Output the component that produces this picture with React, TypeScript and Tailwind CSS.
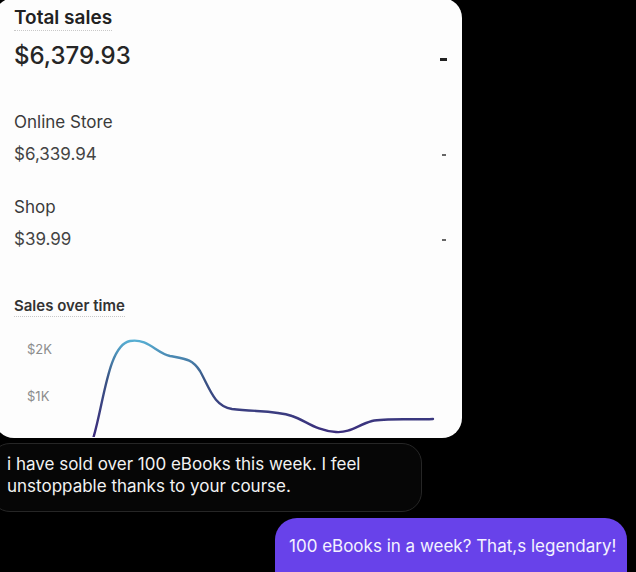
import React from "react";

const rows = [
  { label: "Online Store", value: "$6,339.94", gap: "mt-[41px]" },
  { label: "Shop", value: "$39.99", gap: "mt-[31px]" },
];

function SalesChart() {
  return (
    <div className="relative mt-[7px] h-[113px] w-full shrink-0">
      <div className="flex flex-col pl-[33px] text-[13px] leading-[16px] text-[#8c8c8c]">
        <span className="mt-[17px]">$2K</span>
        <span className="mt-[31px]">$1K</span>
      </div>
      <svg className="absolute inset-0" width="468" height="113" viewBox="0 0 468 113" fill="none">
        <defs>
          <linearGradient id="line" x1="0" y1="340" x2="0" y2="438" gradientUnits="userSpaceOnUse">
            <stop offset="0" stopColor="#58b2d6" />
            <stop offset="0.4" stopColor="#3a5585" />
            <stop offset="1" stopColor="#3b2b7c" />
          </linearGradient>
        </defs>
        <g transform="translate(6,-325)">
          <path
            d="M93 440 C104 404 108 346 130 342 C148 339 156 354 170 357 C186 360 192 360 200 372 C210 390 214 407 232 410 C255 413 275 411 292 417 C305 421 316 432 336 433 C350 434 358 426 372 422 C386 419 410 421 433 420"
            stroke="url(#line)"
            strokeWidth="2.4"
            strokeLinecap="round"
          />
        </g>
      </svg>
    </div>
  );
}

export default function App() {
  return (
    <div className="flex h-[572px] w-[636px] flex-col overflow-hidden bg-black font-['Inter','Liberation_Sans',sans-serif]">
      <div className="-ml-[6px] -mt-[2px] flex h-[440px] w-[468px] shrink-0 flex-col overflow-hidden rounded-[20px] bg-[#fdfdfd] pl-[20px] pt-[8px]">
        <span className="w-fit shrink-0 border-b border-dotted border-[#c8c8c8] text-[19px] font-semibold leading-[24px] text-[#222]">
          Total sales
        </span>
        <div className="mt-[11px] flex shrink-0 items-start justify-between pr-[15px]">
          <span className="text-[24px] font-medium leading-[28px] text-[#262626]">$6,379.93</span>
          <span className="mt-[16px] h-[3px] w-[7px] bg-[#222]" />
        </div>

        {rows.map((r) => (
          <div key={r.label} className={`${r.gap} flex shrink-0 flex-col text-[17px] leading-[22px]`}>
            <span className="text-[#3a3a3a]">{r.label}</span>
            <div className="mt-[10px] flex items-start justify-between pr-[16px]">
              <span className="text-[#444]">{r.value}</span>
              <span className="mt-[11px] h-[2px] w-[4px] bg-[#666]" />
            </div>
          </div>
        ))}

        <span className="mt-[46px] w-fit shrink-0 border-b border-dotted border-[#c8c8c8] text-[15px] font-semibold leading-[20px] text-[#333]">
          Sales over time
        </span>
        <div className="-ml-[20px] shrink-0">
          <SalesChart />
        </div>
      </div>

      <div className="-ml-[10px] mt-[5px] h-[69px] w-[432px] shrink-0 rounded-[20px] border border-[#262626] bg-[#060606] pl-[16px] pt-[9px] text-[17px] leading-[22px] text-[#f2f2f2]">
        i have sold over 100 eBooks this week. I feel
        <br />
        unstoppable thanks to your course.
      </div>

      <div className="mr-[9px] mt-[6px] h-[80px] w-[352px] shrink-0 self-end rounded-[22px] bg-[#6842ea] pl-[14px] pt-[17px] text-[17px] leading-[22px] text-[#f4f2ff]">
        100 eBooks in a week? That,s legendary!
      </div>
    </div>
  );
}
